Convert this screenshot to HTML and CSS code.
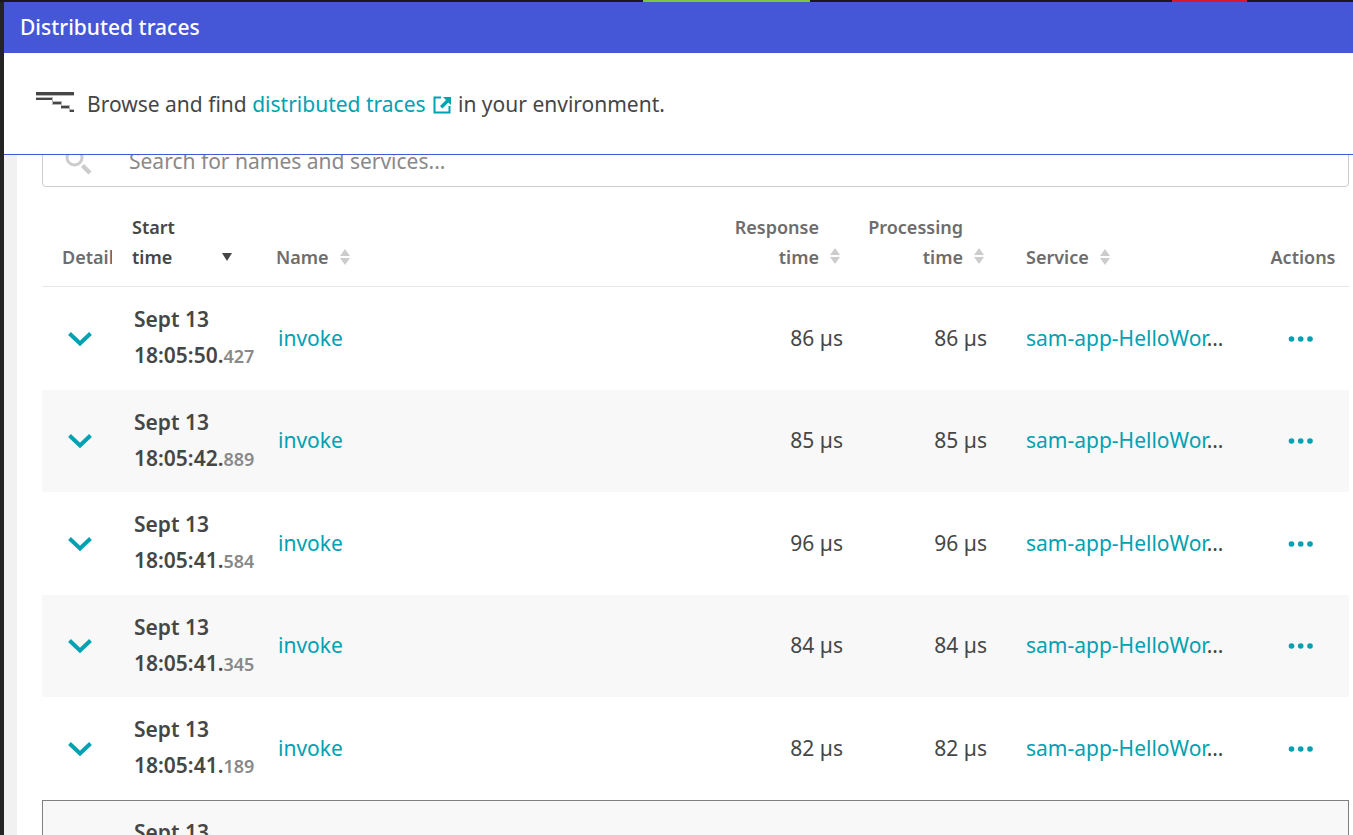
FILE: index.html
```html
<!DOCTYPE html>
<html lang="en">
<head>
<meta charset="utf-8">
<title>Distributed traces</title>
<link rel="stylesheet" href="styles.css">
</head>
<body>
<svg class="defs" aria-hidden="true">
  <symbol id="sort" viewBox="0 0 10 16"><path d="M0 7 5 0l5 7zM0 9h10l-5 7z"/></symbol>
  <symbol id="chevron" viewBox="0 0 24 16"><path d="M1.500 2.500 12 12.500 22.500 2.500" fill="none" stroke="currentColor" stroke-width="4"/></symbol>
  <symbol id="dots" viewBox="0 0 26 6"><circle cx="3.500" cy="3" r="2.800"/><circle cx="12.700" cy="3" r="2.800"/><circle cx="22" cy="3" r="2.800"/></symbol>
</svg>
<div class="app">
  <div class="strip"><span class="strip-green"></span><span class="strip-red"></span></div>
  <div class="panel">
    <header class="title-bar"><h1>Distributed traces</h1></header>
    <section class="intro">
      <svg class="trace-icon" viewBox="0 0 38 20" aria-hidden="true" shape-rendering="crispEdges"><path fill="#b7b7b7" d="M0 3h38v1H0zM0 5h17v4h9v4h8v4h4v3h-5v-3h-8v-4h-9V8H0z"/><path fill="#454646" d="M0 0h38v3H0zM0 6h16v2H0zM17 10h8v2h-8zM25 14h8v2h-8zM34 18h4v2h-4z"/></svg>
      <p>Browse and find <a href="#">distributed traces<svg class="external" viewBox="0 0 18 18" aria-hidden="true"><path d="M8 1.500H1.500v15h15V10" fill="none" stroke="currentColor" stroke-width="2"/><path d="M10 1h8v8l-2.600-2.600-6 6L7 10l6-6z" fill="currentColor"/></svg></a> in your environment.</p>
    </section>
    <main class="viewport">
      <div class="scrolled">
        <label class="search">
          <svg viewBox="0 0 28 28" aria-hidden="true"><g fill="none" stroke="#ccc"><circle cx="9.500" cy="10.500" r="7.500" stroke-width="3"/><path d="m17.500 18.500 7.500 7.500" stroke-width="4.500"/></g></svg>
          <input type="text" aria-label="Search" placeholder="Search for names and services...">
        </label>
        <table class="traces">
          <colgroup><col class="c-detail"><col class="c-time"><col><col class="c-num"><col class="c-num"><col class="c-service"><col class="c-actions"></colgroup>
          <thead>
            <tr>
              <th class="detail"><div class="clip">Detail</div></th>
              <th class="sorted"><button>Start<br>time<svg class="arrow" viewBox="0 0 10 8" aria-hidden="true"><path d="M0 0h10L5 8z"/></svg></button></th>
              <th><button>Name<svg class="sort"><use href="#sort"/></svg></button></th>
              <th class="num"><button><span>Response<br>time</span><svg class="sort"><use href="#sort"/></svg></button></th>
              <th class="num"><button><span>Processing<br>time</span><svg class="sort"><use href="#sort"/></svg></button></th>
              <th class="service"><button>Service<svg class="sort"><use href="#sort"/></svg></button></th>
              <th class="actions">Actions</th>
            </tr>
          </thead>
          <tbody>
            <tr><td class="detail"><button aria-label="Expand"><svg class="chevron"><use href="#chevron"/></svg></button></td><td class="date">Sept 13<br>18:05:50.<small>427</small></td><td class="name"><a href="#">invoke</a></td><td class="num">86 µs</td><td class="num">86 µs</td><td class="service"><a href="#">sam-app-HelloWor</a>…</td><td class="actions"><button aria-label="Actions"><svg class="dots"><use href="#dots"/></svg></button></td></tr>
            <tr><td class="detail"><button aria-label="Expand"><svg class="chevron"><use href="#chevron"/></svg></button></td><td class="date">Sept 13<br>18:05:42.<small>889</small></td><td class="name"><a href="#">invoke</a></td><td class="num">85 µs</td><td class="num">85 µs</td><td class="service"><a href="#">sam-app-HelloWor</a>…</td><td class="actions"><button aria-label="Actions"><svg class="dots"><use href="#dots"/></svg></button></td></tr>
            <tr><td class="detail"><button aria-label="Expand"><svg class="chevron"><use href="#chevron"/></svg></button></td><td class="date">Sept 13<br>18:05:41.<small>584</small></td><td class="name"><a href="#">invoke</a></td><td class="num">96 µs</td><td class="num">96 µs</td><td class="service"><a href="#">sam-app-HelloWor</a>…</td><td class="actions"><button aria-label="Actions"><svg class="dots"><use href="#dots"/></svg></button></td></tr>
            <tr><td class="detail"><button aria-label="Expand"><svg class="chevron"><use href="#chevron"/></svg></button></td><td class="date">Sept 13<br>18:05:41.<small>345</small></td><td class="name"><a href="#">invoke</a></td><td class="num">84 µs</td><td class="num">84 µs</td><td class="service"><a href="#">sam-app-HelloWor</a>…</td><td class="actions"><button aria-label="Actions"><svg class="dots"><use href="#dots"/></svg></button></td></tr>
            <tr><td class="detail"><button aria-label="Expand"><svg class="chevron"><use href="#chevron"/></svg></button></td><td class="date">Sept 13<br>18:05:41.<small>189</small></td><td class="name"><a href="#">invoke</a></td><td class="num">82 µs</td><td class="num">82 µs</td><td class="service"><a href="#">sam-app-HelloWor</a>…</td><td class="actions"><button aria-label="Actions"><svg class="dots"><use href="#dots"/></svg></button></td></tr>
            <tr class="focused"><td></td><td class="date">Sept 13</td><td></td><td></td><td></td><td></td><td></td></tr>
          </tbody>
        </table>
      </div>
    </main>
  </div>
</div>
</body>
</html>
```

FILE: styles.css
```css
* { box-sizing: border-box; }

body {
  margin: 0;
  overflow: hidden;
  background: #fff;
  color: #454646;
  font: 21px/36px "Noto Sans", "Open Sans", sans-serif;
}

a { color: #00a1b2; text-decoration: none; }

button {
  padding: 0;
  border: 0;
  background: none;
  color: inherit;
  font: inherit;
  text-align: inherit;
}

.defs { position: absolute; width: 0; height: 0; }

.app { display: flex; flex-direction: column; height: 100vh; }

.strip {
  display: flex;
  flex: none;
  justify-content: space-between;
  height: 2px;
  padding: 0 106px 0 643px;
  background: #191919;
}
.strip-green { width: 167px; background: #7dc540; }
.strip-red { width: 75px; background: #dc172a; }

.panel {
  display: flex;
  flex: 1;
  flex-direction: column;
  min-height: 0;
  border-left: 4px solid #242424;
}

.title-bar { flex: none; padding: 7px 16px 8px; background: #4556d7; color: #fff; }
.title-bar h1 { margin: 0; font-size: 21px; font-weight: 500; }

.intro {
  display: flex;
  flex: none;
  align-items: flex-start;
  gap: 13px;
  padding: 33px 32px 32px;
  border-bottom: 1px solid #4556d7;
}
.intro p { margin: 0; }
.trace-icon { width: 38px; height: 20px; margin-top: 6px; }
.external { width: 18px; height: 18px; margin: 0 2px 0 7px; vertical-align: -2px; }

.viewport {
  flex: 1;
  min-height: 0;
  overflow: hidden;
  padding: 0 4px 0 25px;
  border-left: 13px solid #f1f1f1;
}
.scrolled { margin-top: -20px; }

.search {
  display: flex;
  align-items: center;
  gap: 36px;
  height: 52px;
  padding: 0 22px;
  border: 1px solid #ccc;
  border-radius: 4px;
}
.search svg { flex: none; width: 28px; height: 28px; }
.search input {
  flex: 1;
  min-width: 0;
  padding: 0;
  border: 0;
  outline: 0;
  background: none;
  font: inherit;
}
.search input::placeholder { color: #898989; opacity: 1; }

.traces {
  width: 100%;
  border-collapse: separate;
  border-spacing: 0;
  table-layout: fixed;
}
.c-detail { width: 80px; }
.c-time, .c-num { width: 144px; }
.c-service { width: 260px; }
.c-actions { width: 92px; }

th {
  height: 100px;
  padding: 24px 10px 14px;
  border-bottom: 1px solid #e6e6e6;
  color: #6d6d6d;
  font-size: 18px;
  font-weight: 600;
  line-height: 30px;
  text-align: left;
  vertical-align: bottom;
}
th.detail { padding-left: 20px; }
.clip { overflow: hidden; white-space: nowrap; }
th.sorted { color: #454646; }
.arrow { width: 10px; height: 8px; margin-left: 50px; vertical-align: 3px; fill: #454646; }
.sort { width: 10px; height: 16px; margin-left: 11px; vertical-align: -1px; fill: #ccc; }
th.num button { display: inline-flex; align-items: flex-end; }
th.num .sort { margin-bottom: 8px; }
th.num { padding-right: 13px; }

td { height: 103px; padding: 0 10px 2px; }
tbody tr:nth-child(even) td { height: 102px; background: #f8f8f8; }
td.detail { padding: 0; }
td.detail button { display: block; margin-left: 26px; }
.chevron { display: block; width: 24px; height: 16px; color: #00a1b2; }
td.date { padding: 0 0 2px 12px; font-weight: 600; white-space: nowrap; }
small { color: #898989; font-size: 18px; }
td.name { padding-left: 12px; }
.num { text-align: right; }
th.num { text-align: right; }
td.service, th.service { padding-left: 29px; }
td.service { padding-right: 0; white-space: nowrap; }
th.actions { padding-left: 0; padding-right: 0; text-align: center; }
td.actions { padding: 0 4px 0 0; }
td.actions button { display: block; margin: 0 auto; }
.dots { display: block; width: 26px; height: 6px; fill: #00a1b2; }

.focused { outline: 1px solid #808080; outline-offset: -1px; }
tr.focused td.date { padding-top: 14px; vertical-align: top; }
```
